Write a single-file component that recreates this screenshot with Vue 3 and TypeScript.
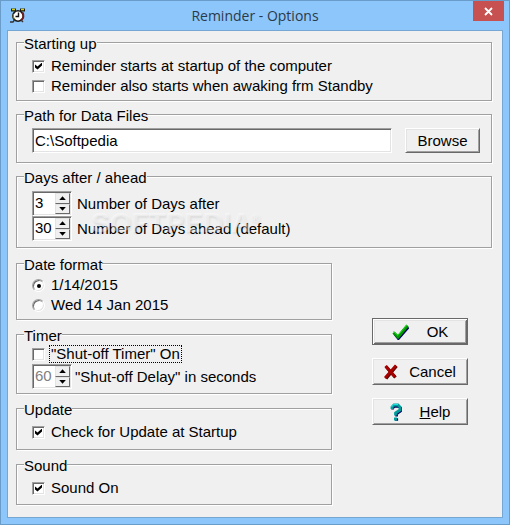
<script setup lang="ts">
import { ref } from 'vue'

const startup = ref(true)
const standby = ref(false)
const path = ref('C:\\Softpedia')
const daysAfter = ref(3)
const daysAhead = ref(30)
const dateFormat = ref<'short' | 'long'>('short')
const timerOn = ref(false)
const timerDelay = ref(60)
const checkUpdate = ref(true)
const soundOn = ref(true)
</script>

<template>
  <main class="window">
    <header class="titlebar">
      <svg class="app-icon" viewBox="0 0 16 16" width="16" height="16" aria-hidden="true">
        <path d="M1 2h5M10 2h5" stroke="#1c1c08" stroke-width="3" />
        <path d="M2 1.500h3M11 1.500h3" stroke="#d4d41c" stroke-width="1.400" />
        <circle cx="8" cy="8" r="5.200" fill="#fff" stroke="#1e1a18" stroke-width="1.600" />
        <path d="M12.500 4.500a6 6 0 0 1-1.500 8" fill="none" stroke="#7a1c18" stroke-width="2" />
        <path d="M3.500 6a5 5 0 0 0 1 5" fill="none" stroke="#8c8420" stroke-width="1.200" />
        <path d="M8.500 4.500V8.500H5.500" fill="none" stroke="#111" stroke-width="1.400" />
        <path d="M4.500 12l-1.500 2H0M11.500 12.500l1.500 1.500" fill="none" stroke="#333" stroke-width="1.400" />
      </svg>
      <h1 class="title">Reminder - Options</h1>
      <button class="close" type="button" aria-label="Close">
        <svg viewBox="0 0 9 9" width="9" height="9" aria-hidden="true">
          <path d="M1 1l7 7M8 1L1 8" stroke="#fff" stroke-width="1.800" />
        </svg>
      </button>
    </header>

    <form class="content" @submit.prevent>
      <fieldset class="group startup">
        <legend>Starting up</legend>
        <label class="option"><input v-model="startup" type="checkbox" /><span>Reminder starts at startup of the computer</span></label>
        <label class="option"><input v-model="standby" type="checkbox" /><span>Reminder also starts when awaking frm Standby</span></label>
      </fieldset>

      <fieldset class="group path">
        <legend>Path for Data Files</legend>
        <div class="path-row">
          <input v-model="path" class="field" type="text" aria-label="Path for Data Files" />
          <button class="btn browse" type="button">Browse</button>
        </div>
      </fieldset>

      <fieldset class="group days">
        <legend>Days after / ahead</legend>
        <div class="spin-row">
          <div class="spin">
            <input id="after" v-model.number="daysAfter" type="text" />
            <div class="arrows">
              <button type="button" aria-label="Increase" @click="daysAfter++"><i class="up"></i></button>
              <button type="button" aria-label="Decrease" @click="daysAfter--"><i class="down"></i></button>
            </div>
          </div>
          <label for="after">Number of Days after</label>
        </div>
        <div class="spin-row">
          <div class="spin">
            <input id="ahead" v-model.number="daysAhead" type="text" />
            <div class="arrows">
              <button type="button" aria-label="Increase" @click="daysAhead++"><i class="up"></i></button>
              <button type="button" aria-label="Decrease" @click="daysAhead--"><i class="down"></i></button>
            </div>
          </div>
          <label for="ahead">Number of Days ahead (default)</label>
        </div>
        <div class="watermark">SOFTPEDIA<sup>®</sup></div>
      </fieldset>

      <div class="lower">
        <div class="groups">
          <fieldset class="group date">
            <legend>Date format</legend>
            <label class="option"><input v-model="dateFormat" type="radio" name="date" value="short" /><span>1/14/2015</span></label>
            <label class="option"><input v-model="dateFormat" type="radio" name="date" value="long" /><span>Wed 14 Jan 2015</span></label>
          </fieldset>

          <fieldset class="group timer">
            <legend>Timer</legend>
            <label class="option"><input v-model="timerOn" type="checkbox" /><span class="focused">"Shut-off Timer" On</span></label>
            <div class="spin-row">
              <div class="spin">
                <input id="delay" v-model.number="timerDelay" type="text" :disabled="!timerOn" />
                <div class="arrows">
                  <button type="button" aria-label="Increase" @click="timerDelay++"><i class="up"></i></button>
                  <button type="button" aria-label="Decrease" @click="timerDelay--"><i class="down"></i></button>
                </div>
              </div>
              <label for="delay">"Shut-off Delay" in seconds</label>
            </div>
          </fieldset>

          <fieldset class="group update">
            <legend>Update</legend>
            <label class="option"><input v-model="checkUpdate" type="checkbox" /><span>Check for Update at Startup</span></label>
          </fieldset>

          <fieldset class="group sound">
            <legend>Sound</legend>
            <label class="option"><input v-model="soundOn" type="checkbox" /><span>Sound On</span></label>
          </fieldset>
        </div>

        <div class="actions">
          <button class="btn action default" type="submit">
            <svg viewBox="0 0 17 16" width="17" height="16" aria-hidden="true">
              <path d="M2 9l4 5L16 2.500" fill="none" stroke="#000060" stroke-width="2.600" transform="translate(0.400 0.700)" />
              <path d="M1.500 8.500l4.500 4.500L15.500 1.500" fill="none" stroke="#009800" stroke-width="3" />
              <path d="M1.500 7.500l4.300 4L15 1" fill="none" stroke="#20d820" stroke-width="1" />
            </svg>
            <span>OK</span>
          </button>
          <button class="btn action cancel" type="button">
            <svg viewBox="0 0 14 16" width="14" height="16" aria-hidden="true">
              <path d="M2 2.500l9.500 11M12.500 2L2 14.500" fill="none" stroke="#500000" stroke-width="3.200" />
              <path d="M1.500 2l9.500 11M12 1.500L1 14" fill="none" stroke="#a80000" stroke-width="2.800" />
            </svg>
            <span>Cancel</span>
          </button>
          <button class="btn action" type="button">
            <svg viewBox="0 0 12 18" width="12" height="18" aria-hidden="true">
              <path d="M2 6V4.500L4 3h4l2 1.500v3L6 10.500V13M4.500 16h3" fill="none" stroke="#00005c" stroke-width="2.600" transform="translate(0.600 0.500)" />
              <path d="M2 6V4L4 2h4l2 2v3L5.500 10v2.500M4 16h3" fill="none" stroke="#009c9c" stroke-width="2.800" />
              <path d="M1.500 4L3.500 1.500H8" fill="none" stroke="#20e0e0" stroke-width="1" />
            </svg>
            <span><u>H</u>elp</span>
          </button>
        </div>
      </div>
    </form>
  </main>
</template>

<style>
body {
  margin: 0;
}
</style>

<style scoped>
* {
  box-sizing: border-box;
}

.window {
  min-height: 100vh;
  display: flex;
  flex-direction: column;
  padding: 0 6px 6px;
  border: 1px solid #699cc9;
  background: #8cc6fb;
  color: #000;
  font: 15px/18px "Liberation Sans", Arial, sans-serif;
}

.titlebar {
  display: flex;
  align-items: flex-start;
  justify-content: space-between;
  height: 29px;
}

.app-icon {
  margin: 7px 0 0 3px;
}

.title {
  flex: 1;
  margin: 0 0 0 11px;
  color: #2c3a48;
  font: 14px/29px "Open Sans", "Noto Sans", sans-serif;
  text-align: center;
}

.close {
  display: flex;
  align-items: center;
  justify-content: center;
  width: 31px;
  height: 20px;
  margin-right: -1px;
  padding: 0;
  border: 0;
  background: #c75050;
}

.content {
  flex: 1;
  display: flex;
  flex-direction: column;
  gap: 4px;
  padding: 2px 10px 10px 8px;
  border: 1px solid #76a7d3;
  background: #f0f0f0;
}

.group {
  position: relative;
  min-width: 0;
  margin: 0;
  padding: 4px 11px 4px 15px;
  border: 1px solid #a0a0a0;
  box-shadow: 1px 1px 0 #fff, inset 1px 1px 0 #fff;
}

.group legend {
  height: 19px;
  margin-left: -8px;
  padding: 3px 0 0;
  background: #f0f0f0;
  line-height: 16px;
}

.group.path {
  padding-bottom: 9px;
}

.group.days {
  padding-top: 5px;
  padding-bottom: 6px;
}

.group.date {
  padding-top: 2px;
}

.group.timer {
  padding-top: 0;
}

.group.update {
  padding-bottom: 7px;
}

.group.sound {
  padding-bottom: 6px;
}

.option {
  display: flex;
  align-items: center;
  gap: 5px;
  width: fit-content;
  height: 20px;
}

.option span {
  padding: 0 1px;
  line-height: 16px;
}

.option .focused {
  outline: 1px dotted #000;
}

.option input {
  position: relative;
  appearance: none;
  flex: none;
  width: 13px;
  height: 13px;
  margin: 0;
  border: 1px solid;
  border-color: #a0a0a0 #fff #fff #a0a0a0;
  background: #fff;
  box-shadow: inset 1px 1px 0 #696969, inset -1px -1px 0 #e3e3e3;
}

.option input[type="radio"] {
  border-radius: 50%;
}

.option input[type="checkbox"]:checked::before {
  content: "";
  position: absolute;
  left: 2px;
  top: 2px;
  width: 7px;
  height: 7px;
  background: #000;
  clip-path: polygon(0 28%, 36% 57%, 100% 0, 100% 43%, 36% 100%, 0 71%);
}

.option input[type="radio"]:checked::before {
  content: "";
  position: absolute;
  left: 4px;
  top: 4px;
  width: 4px;
  height: 4px;
  border-radius: 50%;
  background: #000;
}

.path-row {
  display: flex;
  gap: 13px;
}

.field,
.spin {
  border: 1px solid;
  border-color: #a0a0a0 #fff #fff #a0a0a0;
  background: #fff;
  box-shadow: inset 1px 1px 0 #696969, inset -1px -1px 0 #e3e3e3;
}

.field {
  flex: 1;
  min-width: 0;
  height: 25px;
  padding: 0 2px;
  color: #000;
  font: inherit;
}

.btn {
  border: 1px solid;
  border-color: #fff #696969 #696969 #fff;
  border-radius: 0;
  background: #f0f0f0;
  box-shadow: inset 1px 1px 0 #e3e3e3, inset -1px -1px 0 #a0a0a0;
  color: #000;
  font: inherit;
}

.browse {
  width: 75px;
  height: 25px;
  padding: 0;
}

.spin-row {
  display: flex;
  align-items: center;
  gap: 5px;
}

.timer .spin-row {
  gap: 3px;
}

.spin {
  display: flex;
  width: 40px;
  height: 25px;
  padding: 1px;
}

.spin input {
  flex: 1;
  min-width: 0;
  width: 0;
  padding: 0 0 2px 1px;
  border: 0;
  background: transparent;
  color: #000;
  font: inherit;
}

.spin input:disabled {
  color: #808080;
}

.arrows {
  display: flex;
  flex-direction: column;
  width: 15px;
}

.arrows button {
  flex: 1;
  display: flex;
  align-items: center;
  justify-content: center;
  min-height: 0;
  padding: 0;
  border: 1px solid;
  border-color: #e3e3e3 #696969 #696969 #e3e3e3;
  background: #f0f0f0;
}

.arrows i {
  width: 7px;
  height: 4px;
  background: #000;
}

.up {
  clip-path: polygon(50% 0, 100% 100%, 0 100%);
}

.down {
  clip-path: polygon(0 0, 100% 0, 50% 100%);
}

.watermark {
  position: absolute;
  left: 74px;
  top: 22px;
  color: rgba(255, 255, 255, 0.4);
  font: bold 28px/30px "Liberation Sans", Arial, sans-serif;
  text-shadow: 1px 2px 2px rgba(0, 0, 0, 0.08);
  pointer-events: none;
}

.watermark sup {
  font-size: 12px;
  line-height: 12px;
}

.lower {
  display: flex;
  gap: 40px;
  margin-top: 2px;
}

.groups {
  flex: 1;
  display: flex;
  flex-direction: column;
  gap: 5px;
}

.actions {
  display: flex;
  flex-direction: column;
  gap: 13px;
  margin-right: 24px;
  padding-top: 64px;
}

.action {
  display: flex;
  align-items: center;
  justify-content: center;
  gap: 18px;
  width: 96px;
  height: 27px;
  padding: 0;
}

.action.cancel {
  gap: 11px;
}

.action.default {
  border-color: #696969;
  box-shadow: inset 1px 1px 0 #fff, inset -1px -1px 0 #696969, inset 2px 2px 0 #e3e3e3, inset -2px -2px 0 #a0a0a0;
}
</style>
